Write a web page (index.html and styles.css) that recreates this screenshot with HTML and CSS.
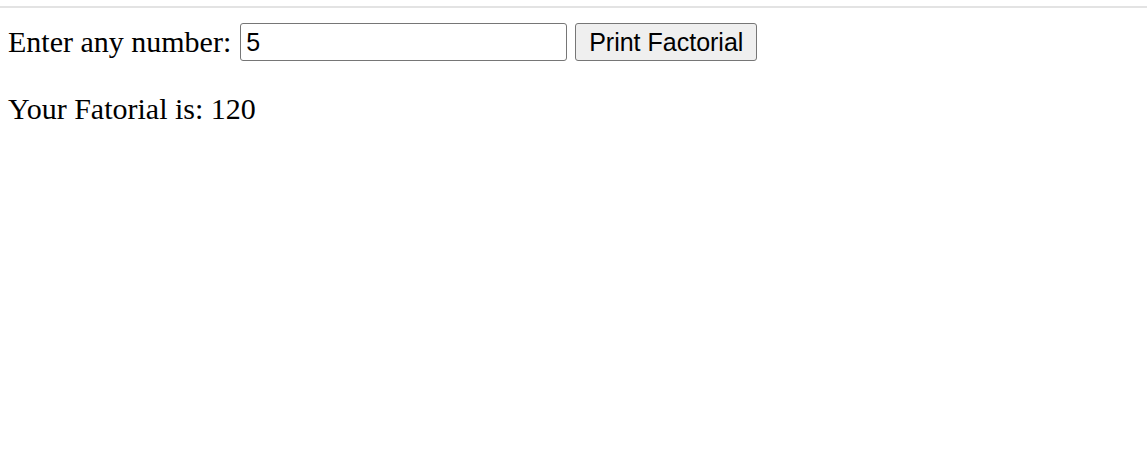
FILE: index.html
```html
<!DOCTYPE html>
<html>
<head>
<meta charset="utf-8">
<link rel="stylesheet" href="styles.css">
</head>
<body>
<div class="topline"></div>
<main class="content">
  <div class="form-row">
    <span class="label">Enter any number:</span>
    <input class="num-input" type="text" value="5">
    <button class="print-btn" type="button">Print Factorial</button>
  </div>
  <div class="result">Your Fatorial is: 120</div>
</main>
</body>
</html>
```

FILE: styles.css
```css
html, body {
  margin: 0;
  padding: 0;
  background: #ffffff;
}
body {
  font-family: "Liberation Serif", "Times New Roman", serif;
  font-size: 30px;
  color: #000000;
}
.topline {
  height: 6px;
  border-bottom: 2px solid #e3e3e3;
}
.content {
  padding: 0 8px;
}
.form-row {
  display: flex;
  align-items: center;
  height: 38px;
  margin-top: 15px;
  gap: 8px;
}
.label {
  line-height: 34.5px;
  padding-right: 1px;
  white-space: nowrap;
}
.num-input {
  box-sizing: border-box;
  width: 327px;
  height: 38px;
  margin: 0;
  padding: 1px 5px 0;
  border: 1px solid #767676;
  border-radius: 3px;
  font-family: "Liberation Sans", Arial, sans-serif;
  font-size: 25px;
  color: #000000;
  background: #ffffff;
  outline: none;
}
.print-btn {
  box-sizing: border-box;
  width: 182px;
  height: 38px;
  margin: 0;
  padding: 1px 4px 0;
  border: 1px solid #767676;
  border-radius: 3px;
  background: #efefef;
  font-family: "Liberation Sans", Arial, sans-serif;
  font-size: 25px;
  color: #000000;
}
.result {
  margin-top: 31px;
  line-height: 34.5px;
}
```
